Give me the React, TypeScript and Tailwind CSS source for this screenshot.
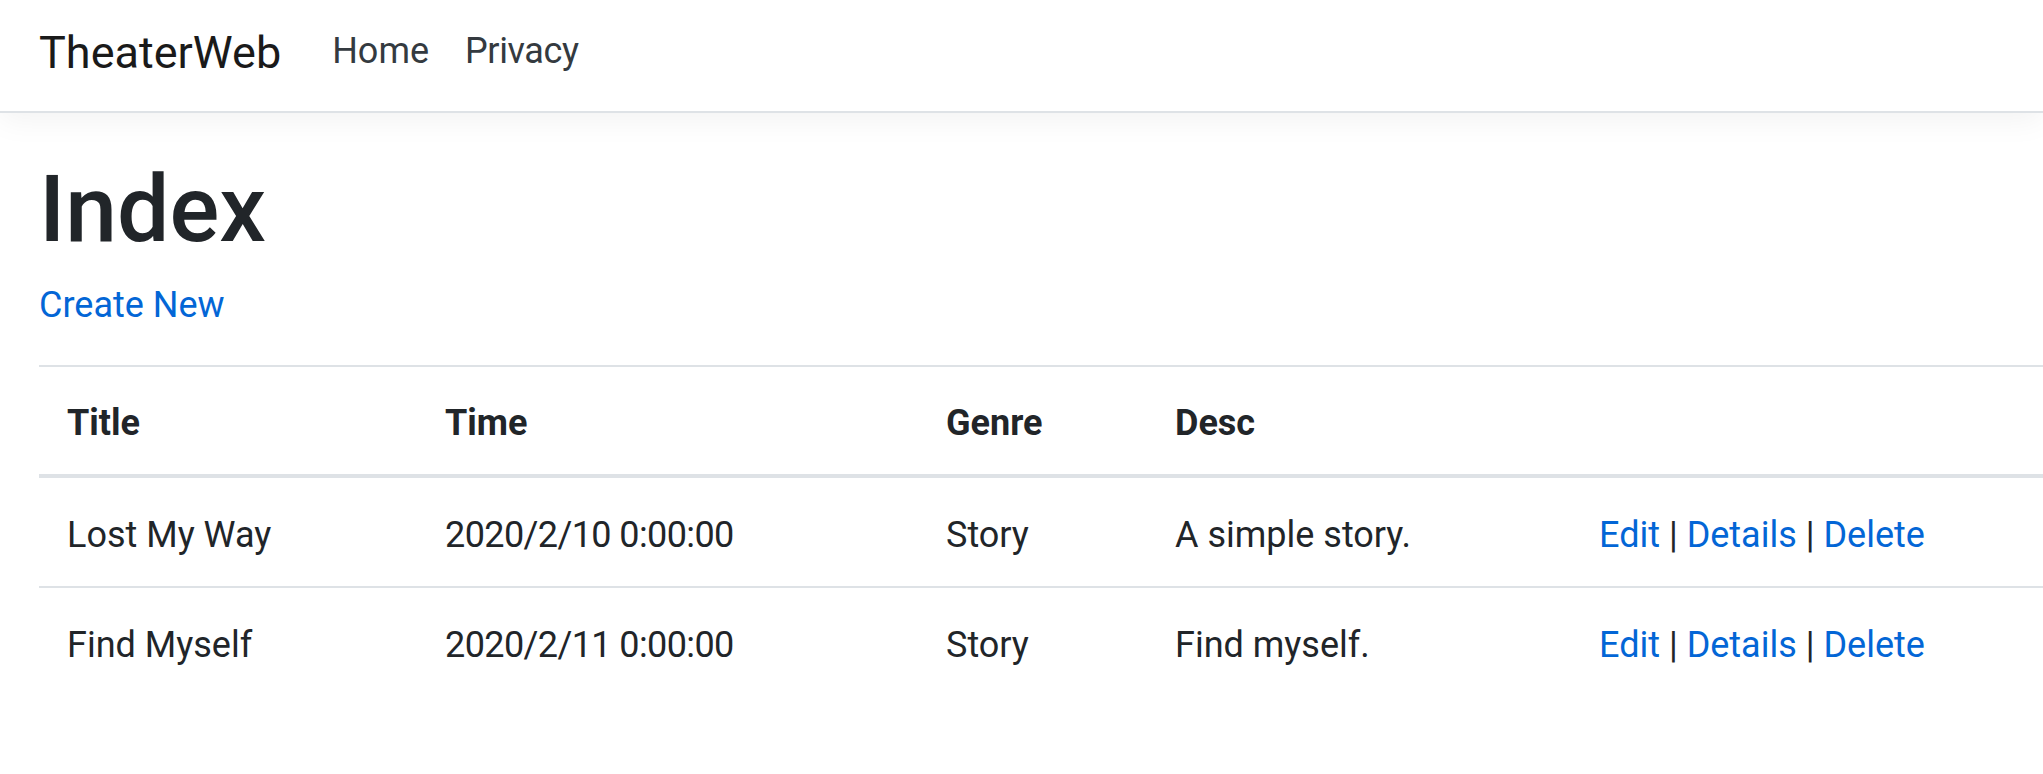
const movies = [
  { title: "Lost My Way", time: "2020/2/10 0:00:00", genre: "Story", desc: "A simple story." },
  { title: "Find Myself", time: "2020/2/11 0:00:00", genre: "Story", desc: "Find myself." },
];

const NavBar = () => (
  <header className="h-[113px] bg-white border-b-2 border-[#dee2e6] shadow-[0_8px_28px_rgba(0,0,0,0.05)]">
    <div className="flex items-start pl-[39px]">
      <a className="mt-[19px] text-[45px] leading-[68px] text-[#1a1a1a]">TheaterWeb</a>
      <nav className="ml-[51px] mt-[24px] flex gap-[36px] text-[36px] leading-[54px] text-[#343a40]">
        <a>Home</a>
        <a className="tracking-[-0.4px]">Privacy</a>
      </nav>
    </div>
  </header>
);

const Actions = () => (
  <>
    <a className="text-[#0366d6]">Edit</a> | <a className="text-[#0366d6]">Details</a> |{" "}
    <a className="text-[#0366d6]">Delete</a>
  </>
);

export default function App() {
  return (
    <div className="min-h-screen bg-white font-['Roboto',sans-serif] text-[#212529] overflow-hidden">
      <NavBar />
      <main className="pl-[39px]">
        <h1 className="mt-[41px] text-[93px] leading-[112px] font-medium">Index</h1>
        <p className="mt-[12px] text-[36px] leading-[54px]">
          <a className="text-[#0366d6]">Create New</a>
        </p>

        <table className="mt-[33px] w-[2004px] table-fixed border-separate border-spacing-0 text-[36px] leading-[54px]">
          <thead>
            <tr className="text-left font-bold">
              <th className="w-[378px] border-t-2 border-b-4 border-[#dee2e6] pl-[28px] pt-[29px] pb-[24px]">Title</th>
              <th className="w-[501px] border-t-2 border-b-4 border-[#dee2e6] pl-[28px] pt-[29px] pb-[24px]">Time</th>
              <th className="w-[229px] border-t-2 border-b-4 border-[#dee2e6] pl-[28px] pt-[29px] pb-[24px]">Genre</th>
              <th className="w-[424px] border-t-2 border-b-4 border-[#dee2e6] pl-[28px] pt-[29px] pb-[24px]">Desc</th>
              <th className="border-t-2 border-b-4 border-[#dee2e6] pl-[28px] pt-[29px] pb-[24px]"></th>
            </tr>
          </thead>
          <tbody>
            {movies.map((m, i) => {
              const cell =
                i === 0
                  ? "pl-[28px] pt-[30px] pb-[24px]"
                  : "pl-[28px] pt-[30px] pb-[24px] border-t-2 border-[#dee2e6]";
              return (
                <tr key={m.title}>
                  <td className={cell}>{m.title}</td>
                  <td className={cell + " tracking-[-0.6px]"}>{m.time}</td>
                  <td className={cell}>{m.genre}</td>
                  <td className={cell}>{m.desc}</td>
                  <td className={cell}>
                    <Actions />
                  </td>
                </tr>
              );
            })}
          </tbody>
        </table>
      </main>
    </div>
  );
}
